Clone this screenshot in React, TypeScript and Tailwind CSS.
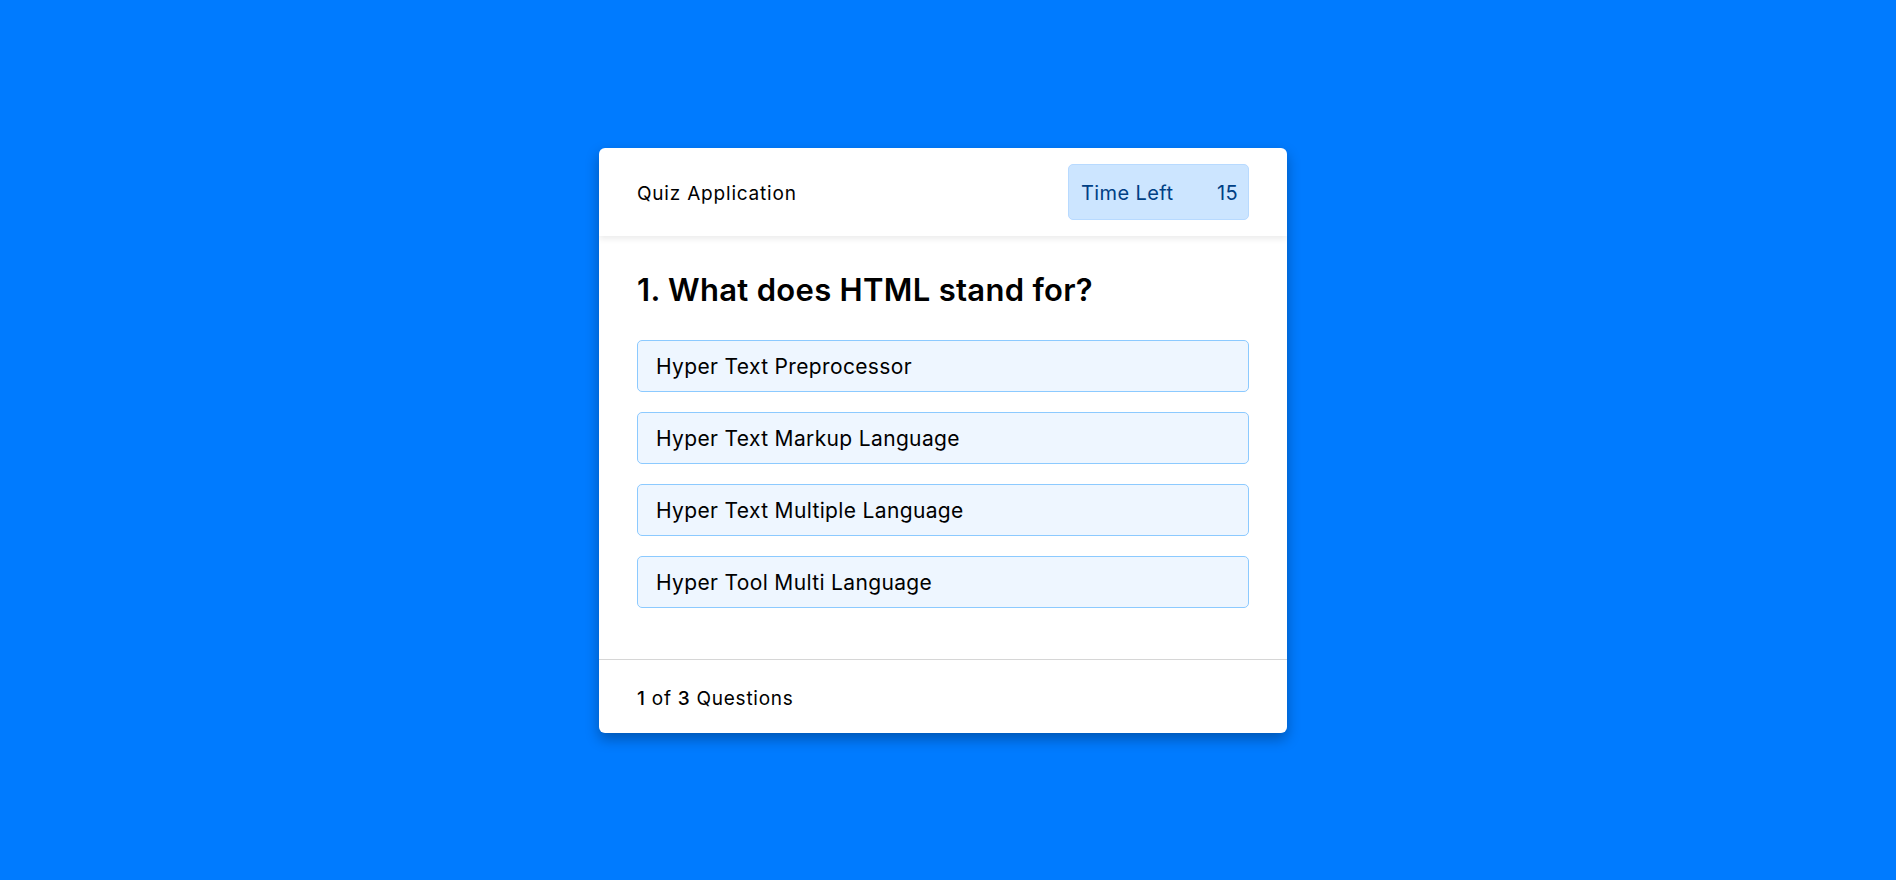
import React from "react";

const options = [
  "Hyper Text Preprocessor",
  "Hyper Text Markup Language",
  "Hyper Text Multiple Language",
  "Hyper Tool Multi Language",
];

export default function App() {
  return (
    <div
      className="min-h-screen w-full bg-[#007bff] flex items-center justify-center pr-[10px]"
      style={{ fontFamily: "Inter, 'Noto Sans', sans-serif" }}
    >
      <div className="w-[688px] bg-white rounded-[6px] shadow-[0_6px_14px_rgba(0,0,0,0.3)] overflow-hidden">
        <div className="relative h-[88px] px-[38px] flex items-center justify-between shadow-[0_3px_6px_rgba(0,0,0,0.08)] z-10">
          <span className="pt-[5px] text-[19px] tracking-[0.8px] text-black">Quiz Application</span>
          <div className="w-[181px] h-[56px] rounded-[5px] bg-[#cce5ff] border border-[#b8daff] text-[#004085] flex items-center justify-between pl-[12px] pr-[10px] pt-[2px] text-[20px] tracking-[0.4px]">
            <span>Time Left</span>
            <span>15</span>
          </div>
        </div>
        <div className="px-[38px] pt-[34px] pb-[51px]">
          <h2 className="text-[31px] font-semibold tracking-[0.3px] text-black leading-[40px] mb-[30px]">
            1. What does HTML stand for?
          </h2>
          <div className="flex flex-col gap-[20px]">
            {options.map((o) => (
              <div
                key={o}
                className="h-[52px] rounded-[5px] bg-[#eef6ff] border border-[#8ccaff] flex items-center pl-[18px] pt-[2px] text-[21px] tracking-[0.35px] text-black"
              >
                {o}
              </div>
            ))}
          </div>
        </div>
        <div className="border-t border-[#d6d6d6] h-[74px] px-[38px] pt-[7px] flex items-center text-[19px] tracking-[0.75px] text-black">
          <span>
            <span className="font-medium">1</span> of <span className="font-medium">3</span> Questions
          </span>
        </div>
      </div>
    </div>
  );
}
